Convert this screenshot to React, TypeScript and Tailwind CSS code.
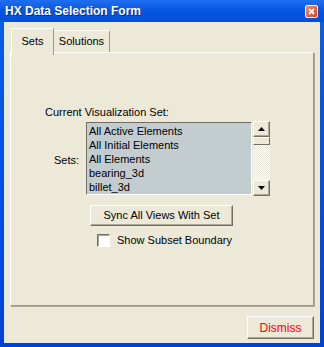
import { useState } from "react";

const items = ["All Active Elements", "All Initial Elements", "All Elements", "bearing_3d", "billet_3d"];

function ScrollArrow({ up }: { up?: boolean }) {
  return (
    <div className="flex h-[16px] w-[17px] items-center justify-center border border-t-white border-l-white border-r-[#716f64] border-b-[#716f64] bg-[#ece9d8] shadow-[inset_-1px_-1px_0_#aca899]">
      <svg width="7" height="4" viewBox="0 0 7 4">
        {up ? <polygon points="3.5,0 7,4 0,4" fill="#000" /> : <polygon points="0,0 7,0 3.5,4" fill="#000" />}
      </svg>
    </div>
  );
}

export default function App() {
  const [checked, setChecked] = useState(false);

  return (
    <div
      className="flex h-[347px] w-[324px] flex-col bg-gradient-to-b from-[#0a5fe8] to-[#0042d6] text-[11px] text-black"
      style={{ fontFamily: '"Liberation Sans", Arial, sans-serif' }}
    >
      {/* title bar */}
      <div className="flex h-[22px] items-center justify-between bg-gradient-to-b from-[#1f6ff0] via-[#0655e0] to-[#044ed8] pl-[5px] pr-[6px]">
        <span className="text-[12px] font-bold text-white [text-shadow:1px_1px_0_#0a2a8a]">HX Data Selection Form</span>
        <button
          type="button"
          className="flex h-[13px] w-[13px] items-center justify-center rounded-[2px] border border-white bg-gradient-to-br from-[#f28a6a] to-[#d9431c]"
        >
          <svg width="7" height="7" viewBox="0 0 7 7">
            <path d="M1 1 L6 6 M6 1 L1 6" stroke="#fff" strokeWidth="1.8" />
          </svg>
        </button>
      </div>

      {/* client area */}
      <div className="mx-[4px] mb-[4px] flex flex-1 flex-col bg-[#ece9d8] pt-[6px]">
        {/* tabs */}
        <div className="flex items-end pl-[7px]">
          <div className="relative z-10 -mb-[3px] flex h-[27px] w-[43px] items-center justify-center border border-b-0 border-t-white border-l-white border-r-[#919b9c] bg-[#ece9d8] pb-[3px] pt-[1px]">
            Sets
          </div>
          <div className="flex h-[22px] w-[56px] items-center justify-center border border-b-0 border-l-0 border-t-white border-r-[#919b9c] bg-[#ece9d8]">
            Solutions
          </div>
        </div>

        {/* panel */}
        <div className="mx-[6px] flex h-[254px] flex-col border border-t-white border-l-white border-r-[#919b9c] border-b-[#919b9c] shadow-[1px_1px_0_#aca899] pl-[34px] pt-[53px]">
          <div className="leading-[13px]">Current Visualization Set:</div>

          <div className="mt-[3px] flex items-start">
            <div className="mt-[30px] w-[41px] pr-[7px] text-right">Sets:</div>
            <div className="h-[73px] w-[166px] border border-t-[#716f64] border-l-[#716f64] border-r-white border-b-white bg-[#c3cdd0] pl-[2px] pt-[1px]">
              {items.map((item) => (
                <div key={item} className="h-[14px] leading-[14px]">
                  {item}
                </div>
              ))}
            </div>
            <div className="ml-[1px] -mt-[1px] flex h-[75px] flex-col">
              <ScrollArrow up />
              <div className="h-[8px] w-[17px] border border-t-white border-l-white border-r-[#716f64] border-b-[#716f64] bg-[#ece9d8]" />
              <div className="w-[17px] flex-1 bg-[#f4f3ee] bg-[repeating-conic-gradient(#ffffff_0_25%,#e7e5dc_0_50%)] bg-[length:2px_2px]" />
              <ScrollArrow />
            </div>
          </div>

          <button
            type="button"
            className="ml-[45px] mt-[9px] flex h-[21px] w-[143px] items-center justify-center border border-t-white border-l-white border-r-[#716f64] border-b-[#716f64] bg-[#ece9d8] shadow-[inset_-1px_-1px_0_#aca899]"
          >
            Sync All Views With Set
          </button>

          <label className="ml-[52px] mt-[6px] flex items-center gap-[7px]">
            <input
              type="checkbox"
              checked={checked}
              onChange={() => setChecked(!checked)}
              className="h-[13px] w-[13px] appearance-none border border-t-[#716f64] border-l-[#716f64] border-r-white border-b-white bg-white shadow-[inset_1px_1px_0_#aca899]"
            />
            <span>Show Subset Boundary</span>
          </label>
        </div>

        <div className="mt-auto flex justify-end pr-[6px]">
          <button
            type="button"
            className="flex h-[23px] w-[67px] items-center justify-center border border-t-white border-l-white border-r-[#716f64] border-b-[#716f64] bg-[#ece9d8] text-[12px] text-[#ff0000] shadow-[inset_-1px_-1px_0_#aca899]"
          >
            Dismiss
          </button>
        </div>
        <div className="h-[4px]" />
      </div>
    </div>
  );
}
